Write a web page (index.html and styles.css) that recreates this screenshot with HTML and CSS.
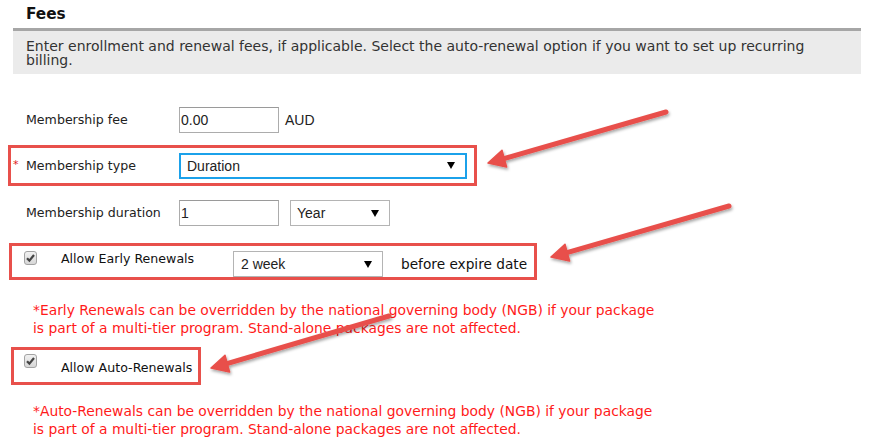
FILE: index.html
```html
<!DOCTYPE html>
<html>
<head>
<meta charset="utf-8">
<title>Fees</title>
<link rel="stylesheet" href="styles.css">
</head>
<body>
<div class="page">
  <h2 class="title">Fees</h2>
  <div class="intro">Enter enrollment and renewal fees, if applicable. Select the auto-renewal option if you want to set up recurring billing.</div>

  <div class="row row-fee">
    <span class="label">Membership fee</span>
    <input class="text-input" type="text" value="0.00">
    <span class="unit">AUD</span>
  </div>

  <div class="row hl row-type">
    <span class="req">*</span>
    <span class="label">Membership type</span>
    <div class="select select-type"><span>Duration</span><span class="caret"></span></div>
  </div>

  <div class="row row-duration">
    <span class="label">Membership duration</span>
    <input class="text-input" type="text" value="1">
    <div class="select select-year"><span>Year</span><span class="caret"></span></div>
  </div>

  <div class="row hl row-early">
    <svg class="check" width="13" height="14" viewBox="0 0 13 14">
      <defs><linearGradient id="cg" x1="0" y1="0" x2="0" y2="1"><stop offset="0" stop-color="#f2f2f2"/><stop offset="1" stop-color="#d6d6d6"/></linearGradient></defs>
      <rect x="0.5" y="0.5" width="12" height="13" rx="2.5" fill="url(#cg)" stroke="#a3a3a3"/>
      <path d="M3 7.2 L5.4 9.6 L10 4" fill="none" stroke="#444" stroke-width="2.2"/>
    </svg>
    <span class="check-label early-label">Allow Early Renewals</span>
    <div class="select select-week"><span>2 week</span><span class="caret"></span></div>
    <span class="after">before expire date</span>
  </div>

  <p class="note note-early">*Early Renewals can be overridden by the national governing body (NGB) if your package is part of a multi-tier program. Stand-alone packages are not affected.</p>

  <div class="row hl row-auto">
    <svg class="check" width="13" height="14" viewBox="0 0 13 14">
      <rect x="0.5" y="0.5" width="12" height="13" rx="2.5" fill="url(#cg)" stroke="#a3a3a3"/>
      <path d="M3 7.2 L5.4 9.6 L10 4" fill="none" stroke="#444" stroke-width="2.2"/>
    </svg>
    <span class="check-label auto-label">Allow Auto-Renewals</span>
  </div>

  <p class="note note-auto">*Auto-Renewals can be overridden by the national governing body (NGB) if your package is part of a multi-tier program. Stand-alone packages are not affected.</p>

  <svg class="annotations" width="877" height="443" viewBox="0 0 877 443">
    <defs>
      <filter id="sh" x="-10%" y="-30%" width="120%" height="160%">
        <feDropShadow dx="1" dy="2" stdDeviation="1.6" flood-color="#000" flood-opacity="0.35"/>
      </filter>
    </defs>
    <g filter="url(#sh)" fill="#e8504b" stroke="#e8504b">
      <line x1="666" y1="112" x2="504" y2="158.6" stroke-width="5" stroke-linecap="round"/>
      <polygon points="488,163 506.6,167 502,150.2" stroke-width="1.5" stroke-linejoin="round"/>
      <line x1="729" y1="206" x2="567" y2="252.6" stroke-width="5" stroke-linecap="round"/>
      <polygon points="551,257 569.6,261 565,244.2" stroke-width="1.5" stroke-linejoin="round"/>
      <line x1="389" y1="316" x2="227" y2="363.6" stroke-width="5" stroke-linecap="round"/>
      <polygon points="211,368 229.6,372 225,355.2" stroke-width="1.5" stroke-linejoin="round"/>
    </g>
  </svg>
</div>
</body>
</html>
```

FILE: styles.css
```css
* { box-sizing: border-box; }

html, body {
  margin: 0;
  padding: 0;
  background: #ffffff;
}

body {
  font-family: "DejaVu Sans", Verdana, sans-serif;
  font-size: 12.6px;
  line-height: 14px;
  color: #222222;
}

.page {
  position: relative;
  width: 877px;
  height: 443px;
  overflow: hidden;
}

.title {
  margin: 0;
  height: 28px;
  padding: 5px 0 0 26px;
  font-size: 15.3px;
  line-height: 18px;
  font-weight: bold;
  color: #111111;
}

.intro {
  margin: 0 16px 0 13px;
  height: 46px;
  padding: 8px 20px 0 13px;
  border-top: 3px solid #a6a6a6;
  background: #ebebeb;
  color: #333333;
  font-size: 14px;
  line-height: 14px;
}

.row {
  display: flex;
  align-items: center;
}

.label {
  flex: none;
  width: 153px;
}

.text-input {
  flex: none;
  width: 100px;
  height: 26px;
  margin: 0;
  padding: 0 1px;
  border: 1px solid #acacac;
  border-top-color: #9a9a9a;
  font-family: "Liberation Sans", Arial, sans-serif;
  font-size: 14px;
  color: #222222;
  background: #fff;
  outline: none;
}

.select {
  flex: none;
  display: flex;
  align-items: center;
  justify-content: space-between;
  height: 26px;
  padding: 0 10px 0 6px;
  border: 1px solid #b4b4b4;
  background: #fff;
  font-family: "Liberation Sans", Arial, sans-serif;
  font-size: 14px;
  color: #222222;
}

.caret {
  width: 0;
  height: 0;
  border-left: 4px solid transparent;
  border-right: 4px solid transparent;
  border-top: 7px solid #000;
}

.hl {
  border: 3px solid #e8504b;
}

/* Membership fee */
.row-fee {
  height: 26px;
  margin-top: 33px;
  padding-left: 26px;
}

.unit {
  margin-left: 6px;
  font-family: "Liberation Sans", Arial, sans-serif;
  font-size: 14px;
}

/* Membership type */
.row-type {
  width: 469px;
  height: 41px;
  margin: 12px 0 0 8px;
  padding-left: 2px;
}

.req {
  flex: none;
  width: 13px;
  margin-bottom: 1px;
  color: #e02020;
  font-size: 11px;
}

.select-type {
  width: 288px;
  border: 2px solid #1ba1ea;
  padding-left: 6px;
}

/* Membership duration */
.row-duration {
  height: 26px;
  margin-top: 14px;
  padding-left: 26px;
}

.select-year {
  width: 100px;
  margin-left: 11px;
}

/* Early renewals */
.row-early {
  width: 528px;
  height: 37px;
  margin: 17px 0 0 9px;
  padding: 5px 0 0 12px;
  align-items: flex-start;
}

.check {
  flex: none;
  display: block;
}

.check-label {
  flex: none;
  margin-left: 24px;
  color: #111111;
}

.early-label {
  width: 172px;
  margin-top: 1px;
}

.select-week {
  width: 150px;
  padding-left: 7px;
}

.after {
  margin: 6px 0 0 18px;
  font-size: 13.7px;
  color: #111111;
}

/* Notes */
.note {
  margin: 0;
  padding-left: 33px;
  width: 665px;
  color: #ff1a1a;
  font-size: 13.85px;
  line-height: 18px;
}

.note-early {
  margin-top: 21px;
}

.note-auto {
  margin-top: 17px;
}

/* Auto renewals */
.row-auto {
  width: 190px;
  height: 38px;
  margin: 10px 0 0 11px;
  padding: 4px 0 0 10px;
  align-items: flex-start;
}

.auto-label {
  margin-top: 7px;
}

.annotations {
  position: absolute;
  top: 0;
  left: 0;
  pointer-events: none;
}
```
